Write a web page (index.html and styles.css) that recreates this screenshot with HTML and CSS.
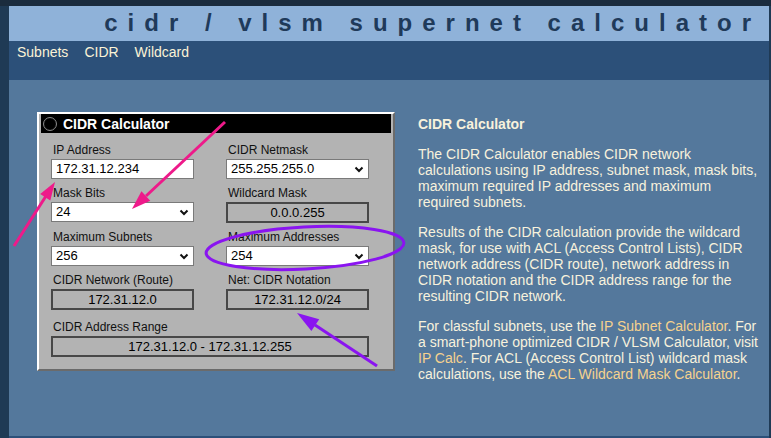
FILE: index.html
```html
<!DOCTYPE html>
<html>
<head>
<meta charset="utf-8">
<title>CIDR / VLSM Supernet Calculator</title>
<link rel="stylesheet" href="styles.css">
</head>
<body>
<div class="page">
  <header class="banner"><h1 class="site-title">cidr / vlsm supernet calculator</h1></header>
  <nav class="nav"><a class="nav-link">Subnets</a><a class="nav-link">CIDR</a><a class="nav-link">Wildcard</a></nav>
  <main class="main">
    <section class="calc">
      <div class="calc-title"><span class="radio"></span><span>CIDR Calculator</span></div>
      <div class="calc-grid">
        <div class="field"><span class="label">IP Address</span><div class="input">172.31.12.234</div></div>
        <div class="field"><span class="label">CIDR Netmask</span><div class="select"><span>255.255.255.0</span><svg class="chev" width="10" height="7" viewBox="0 0 10 7"><polyline points="1.5,1.5 5,5 8.5,1.5"/></svg></div></div>
        <div class="field"><span class="label">Mask Bits</span><div class="select"><span>24</span><svg class="chev" width="10" height="7" viewBox="0 0 10 7"><polyline points="1.5,1.5 5,5 8.5,1.5"/></svg></div></div>
        <div class="field"><span class="label">Wildcard Mask</span><div class="output">0.0.0.255</div></div>
        <div class="field"><span class="label">Maximum Subnets</span><div class="select"><span>256</span><svg class="chev" width="10" height="7" viewBox="0 0 10 7"><polyline points="1.5,1.5 5,5 8.5,1.5"/></svg></div></div>
        <div class="field"><span class="label">Maximum Addresses</span><div class="select"><span>254</span><svg class="chev" width="10" height="7" viewBox="0 0 10 7"><polyline points="1.5,1.5 5,5 8.5,1.5"/></svg></div></div>
        <div class="field"><span class="label">CIDR Network (Route)</span><div class="output">172.31.12.0</div></div>
        <div class="field"><span class="label">Net: CIDR Notation</span><div class="output">172.31.12.0/24</div></div>
        <div class="field wide"><span class="label">CIDR Address Range</span><div class="output">172.31.12.0 - 172.31.12.255</div></div>
      </div>
    </section>
    <section class="info">
      <h2 class="info-title">CIDR Calculator</h2>
      <p class="info-text">The CIDR Calculator enables CIDR network calculations using IP address, subnet mask, mask bits, maximum required IP addresses and maximum required subnets.</p>
      <p class="info-text">Results of the CIDR calculation provide the wildcard mask, for use with ACL (Access Control Lists), CIDR network address (CIDR route), network address in CIDR notation and the CIDR address range for the resulting CIDR network.</p>
      <p class="info-text">For classful subnets, use the <a class="link">IP Subnet Calculator</a>. For a smart-phone optimized CIDR / VLSM Calculator, visit <a class="link">IP Calc</a>. For ACL (Access Control List) wildcard mask calculations, use the <a class="link">ACL Wildcard Mask Calculator</a>.</p>
    </section>
  </main>
</div>
<svg class="annotations" width="771" height="438" viewBox="0 0 771 438">
  <g class="pink">
    <line x1="14" y1="246" x2="46" y2="196"/>
    <polygon points="55,182 50.3,200.4 40.2,193.9"/>
    <line x1="225" y1="122" x2="146" y2="196"/>
    <polygon points="132,209 150.3,200.8 141.4,191.3"/>
  </g>
  <g class="purple">
    <ellipse cx="305" cy="248" rx="99" ry="21" transform="rotate(-3 305 248)"/>
    <line x1="377" y1="366" x2="315" y2="325"/>
    <polygon points="297,313 319.2,319.3 311.4,330.9"/>
  </g>
</svg>
</body>
</html>
```
FILE: styles.css
```css
html, body {
  margin: 0;
  padding: 0;
}
body {
  width: 771px;
  height: 438px;
  overflow: hidden;
  background: #1f3a55;
  border-top: 6px solid #1b2c3e;
  box-sizing: border-box;
  font-family: "Liberation Sans", Arial, sans-serif;
  position: relative;
}
.page {
  margin: 0 2px 0 9px;
  border-bottom: 2px solid #2c5079;
}
.banner {
  height: 35px;
  background: #8fb2d9;
  text-align: right;
  padding-right: 8px;
}
.site-title {
  margin: 0;
  font-size: 24px;
  font-weight: bold;
  letter-spacing: 10px;
  line-height: 33px;
  color: #1f3a5a;
  white-space: nowrap;
}
.nav {
  height: 39px;
  box-sizing: border-box;
  background: #2c5079;
  padding: 3px 0 0 8px;
  display: flex;
  gap: 16px;
}
.nav-link {
  font-size: 14px;
  line-height: 16px;
  color: #fbf3d6;
}
.main {
  height: 356px;
  box-sizing: border-box;
  background: #54789c;
  display: flex;
  padding: 32px 0 0 28px;
}
.calc {
  width: 358px;
  height: 259px;
  box-sizing: border-box;
  background: #b3b3b3;
  border: 2px solid;
  border-color: #ffffff #6b6b6b #6b6b6b #ffffff;
  padding: 0 2px;
  flex: none;
}
.calc-title {
  height: 19px;
  background: #000;
  color: #fff;
  display: flex;
  align-items: center;
  gap: 6px;
  padding-left: 2px;
  font-size: 14px;
  font-weight: bold;
}
.radio {
  width: 12px;
  height: 12px;
  border-radius: 50%;
  border: 1px solid #8a8a8a;
  background: radial-gradient(circle, #000 55%, #2a2a2a 100%);
}
.calc-grid {
  display: grid;
  grid-template-columns: 143px 143px;
  column-gap: 32px;
  row-gap: 7px;
  padding: 10px 0 0 10px;
}
.field {
  display: flex;
  flex-direction: column;
}
.wide {
  grid-column: 1 / -1;
  margin-top: 3px;
}
.label {
  display: block;
  font-size: 12px;
  line-height: 14px;
  margin-bottom: 2px;
  padding-left: 2px;
  color: #111;
}
.input, .select {
  height: 20px;
  box-sizing: border-box;
  background: #fff;
  border: 1px solid #7a7a7a;
  font-size: 13px;
  line-height: 18px;
  padding: 0 4px;
  color: #000;
}
.select {
  display: flex;
  justify-content: space-between;
  align-items: center;
}
.chev polyline {
  fill: none;
  stroke: #111;
  stroke-width: 2;
}
.output {
  height: 21px;
  box-sizing: border-box;
  border: 2px solid #484848;
  text-align: center;
  font-size: 13px;
  line-height: 17px;
  color: #000;
}
.info {
  margin-left: 23px;
  width: 347px;
  padding-top: 4px;
  color: #f8f2dc;
  font-size: 14px;
  line-height: 16px;
}
.info-title {
  margin: 0;
  font-size: 14px;
  font-weight: bold;
  line-height: 16px;
}
.info-text {
  margin: 14px 0 0;
}
.link {
  color: #f6d28e;
}
.annotations {
  position: absolute;
  left: 0;
  top: -6px;
  pointer-events: none;
}
.pink line { stroke: #ee1a8a; stroke-width: 3; }
.pink polygon { fill: #ee1a8a; }
.purple line { stroke: #8a14f0; stroke-width: 3; }
.purple polygon { fill: #8a14f0; }
.purple ellipse { fill: none; stroke: #8a14f0; stroke-width: 3; }
```
